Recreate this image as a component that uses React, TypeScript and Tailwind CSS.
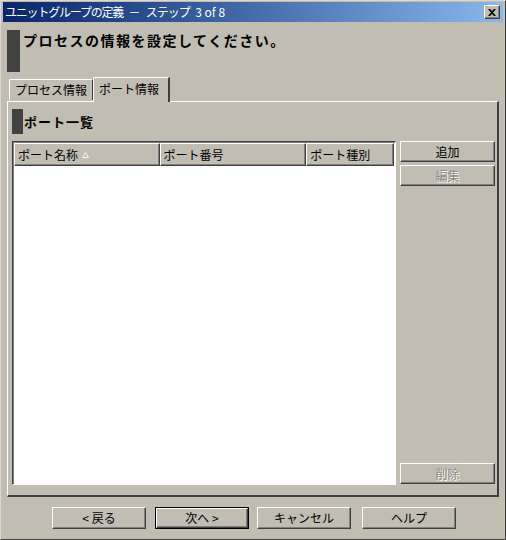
import { ReactNode } from "react";

const font = "font-['Noto_Sans_CJK_JP','Noto_Sans',sans-serif]";

const Bevel = "border border-t-white border-l-white border-r-[#404040] border-b-[#404040] shadow-[inset_-1px_-1px_#808080]";

const Button = ({
  children,
  disabled,
  isDefault,
  className = "",
}: {
  children: ReactNode;
  disabled?: boolean;
  isDefault?: boolean;
  className?: string;
}) => {
  const inner = (
    <div
      className={`${Bevel} h-full w-full flex items-center justify-center text-[12px] leading-none ${
        disabled ? "text-[#8a877f] [text-shadow:1px_1px_#ffffff]" : "text-black"
      }`}
    >
      {children}
    </div>
  );
  if (isDefault) {
    return <div className={`border border-black ${className}`}>{inner}</div>;
  }
  return <div className={className}>{inner}</div>;
};

const HeaderCell = ({ children, className = "" }: { children: ReactNode; className?: string }) => (
  <div className={`${Bevel} h-full flex items-center pl-[3px] text-[12px] leading-none ${className}`}>
    {children}
  </div>
);

export default function App() {
  return (
    <div
      className={`${font} w-[506px] h-[540px] bg-[#c1bdb3] flex flex-col border border-t-[#dcd8d0] border-l-[#dcd8d0] border-r-[#404040] border-b-[#404040] overflow-hidden`}
    >
      {/* title bar */}
      <div className="mx-[2px] mt-[1px] h-[20px] bg-gradient-to-r from-[#0a246a] to-[#8ab8ea] flex items-center justify-between pl-[2px] pr-[3px]">
        <span className="text-white text-[12px] leading-none whitespace-pre">
          <span className="tracking-[-1.2px]">ユニットグループの定義</span>
          {"  －  "}
          <span className="tracking-[-1px]">ステップ</span>
          {"  3 of 8"}
        </span>
        <div className={`${Bevel} w-[16px] h-[14px] bg-[#c1bdb3] flex items-center justify-center`}>
          <svg width="8" height="7" viewBox="0 0 8 7">
            <path d="M0 0h2l2 2 2-2h2L5 3.5 8 7H6L4 5 2 7H0l3-3.5z" fill="#000" />
          </svg>
        </div>
      </div>

      {/* header */}
      <div className="flex items-start pl-[6px] mt-[8px]">
        <div className="w-[13px] h-[42px] bg-[#424242]" />
        <span className="ml-[3px] mt-[3px] text-[14px] font-bold leading-none tracking-[1.5px] text-black">
          プロセスの情報を設定してください。
        </span>
      </div>

      {/* tabs */}
      <div className="flex items-end ml-[8px] mt-[5px] h-[24px] relative z-10">
        <div className="w-[84px] h-[21px] border-l border-t border-white border-r border-r-[#404040] rounded-tl-[2px] flex items-center justify-center text-[12px] leading-none mb-[1px]">
          プロセス情報
        </div>
        <div className="w-[77px] h-[25px] -mb-[1px] bg-[#c1bdb3] border-l border-t border-white border-r-2 border-r-[#404040] rounded-tl-[2px] flex items-center pl-[5px] text-[12px] leading-none pb-[2px]">
          ポート情報
        </div>
      </div>

      {/* panel */}
      <div className="ml-[6px] mr-[6px] h-[396px] border-l border-t border-white border-r-2 border-b-2 border-r-[#404040] border-b-[#404040] flex flex-col pl-[4px] pr-[2px]">
        <div className="flex items-center mt-[7px]">
          <div className="w-[11px] h-[25px] bg-[#424242]" />
          <span className="ml-[1px] text-[13px] font-bold leading-none tracking-[1px]">ポート一覧</span>
        </div>

        <div className="flex mt-[7px] gap-[4px] h-[344px]">
          {/* table */}
          <div className="w-[384px] h-full border border-t-[#404040] border-l-[#404040] border-r-white border-b-white shadow-[inset_1px_1px_#808080] bg-white flex flex-col p-[1px]">
            <div className="flex h-[23px] bg-[#c1bdb3]">
              <HeaderCell className="w-[146px]">
                ポート名称
                <svg className="ml-[4px]" width="7" height="6" viewBox="0 0 7 6">
                  <path d="M3.5 0.5L6.5 5.5H0.5Z" fill="none" stroke="#f4f4f4" />
                </svg>
              </HeaderCell>
              <HeaderCell className="w-[147px]">ポート番号</HeaderCell>
              <HeaderCell className="w-[88px]">ポート種別</HeaderCell>
              <div className="flex-1 bg-white" />
            </div>
            <div className="flex-1 bg-white" />
          </div>

          {/* side buttons */}
          <div className="w-[95px] flex flex-col">
            <Button className="h-[21px]">追加</Button>
            <Button className="h-[21px] mt-[3px]" disabled>
              編集
            </Button>
            <div className="flex-1" />
            <Button className="h-[21px] mb-[1px]" disabled>
              削除
            </Button>
          </div>
        </div>
      </div>

      {/* bottom buttons */}
      <div className="flex mt-[10px] ml-[51px]">
        <Button className="w-[94px] h-[22px]">&lt; 戻る</Button>
        <Button className="w-[94px] h-[22px] ml-[9px]" isDefault>
          次へ &gt;
        </Button>
        <Button className="w-[94px] h-[22px] ml-[8px]">キャンセル</Button>
        <Button className="w-[94px] h-[22px] ml-[11px]">ヘルプ</Button>
      </div>
    </div>
  );
}
